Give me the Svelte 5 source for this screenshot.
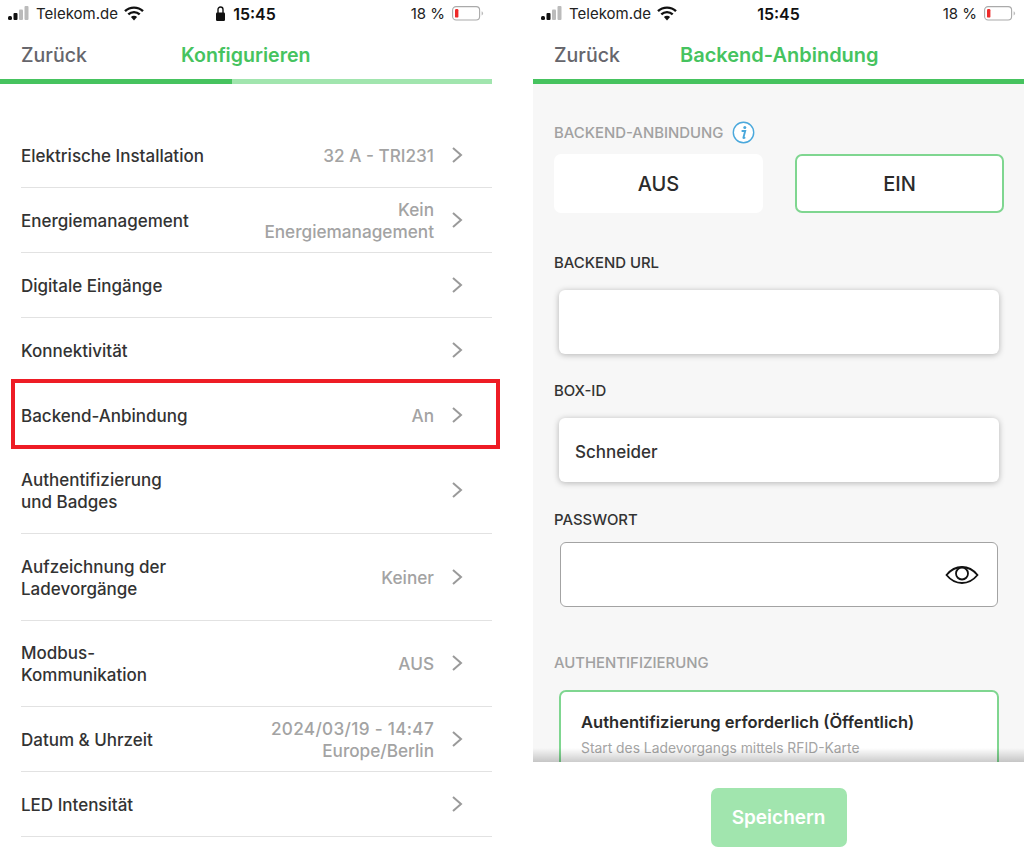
<script>
  const rows = [
    { label: ["Elektrische Installation"], value: ["32 A - TRI231"], tall: false },
    { label: ["Energiemanagement"], value: ["Kein", "Energiemanagement"], tall: false },
    { label: ["Digitale Eingänge"], value: [], tall: false },
    { label: ["Konnektivität"], value: [], tall: false },
    { label: ["Backend-Anbindung"], value: ["An"], tall: false, marked: true },
    { label: ["Authentifizierung", "und Badges"], value: [], tall: true },
    { label: ["Aufzeichnung der", "Ladevorgänge"], value: ["Keiner"], tall: true },
    { label: ["Modbus-", "Kommunikation"], value: ["AUS"], tall: true },
    { label: ["Datum & Uhrzeit"], value: ["2024/03/19 - 14:47", "Europe/Berlin"], tall: false, wide: true },
    { label: ["LED Intensität"], value: [], tall: false }
  ];
</script>

{#snippet statusBar(locked)}
  <div class="status">
    <div class="carrier">
      <svg width="22" height="15" viewBox="0 0 22 15">
        <rect x="0" y="10" width="4" height="4" rx="1.500" fill="#111" />
        <rect x="5.500" y="7" width="4" height="7" rx="1" fill="#111" />
        <rect x="11" y="3.500" width="4" height="10.500" rx="1" fill="#bbb" />
        <rect x="16.500" y="0" width="4" height="14" rx="1" fill="#bbb" />
      </svg>
      <span>Telekom.de</span>
      <svg class="wifi" width="20" height="15" viewBox="0 0 20 15">
        <path d="M1 5.200a13 13 0 0 1 18 0" fill="none" stroke="#111" stroke-width="2.400" />
        <path d="M4.300 8.400a8.400 8.400 0 0 1 11.400 0" fill="none" stroke="#111" stroke-width="2.400" />
        <path d="M6.900 11a4.400 4.400 0 0 1 6.200 0L10 14.400z" fill="#111" />
      </svg>
    </div>
    <div class="clock">
      {#if locked}
        <svg width="9" height="15" viewBox="0 0 9 15">
          <path d="M2 7V3.500a2.500 2.500 0 0 1 5 0V7" fill="none" stroke="#111" stroke-width="1.400" />
          <rect x="0" y="6.500" width="9" height="8.500" rx="1.200" fill="#111" />
        </svg>
      {/if}
      <span>15:45</span>
    </div>
    <div class="battery">
      <span>18 %</span>
      <svg width="32" height="15" viewBox="0 0 32 15">
        <rect x="0.600" y="0.600" width="27" height="13.400" rx="3.500" fill="#fff" stroke="#aaa" stroke-width="1.100" />
        <rect x="3" y="3" width="3.400" height="8.600" rx="1.200" fill="#ee2b2b" />
        <path d="M29.600 5.200a2.400 2.400 0 0 1 0 4.400z" fill="#bbb" />
      </svg>
    </div>
  </div>
{/snippet}

<div class="page">
  <section class="phone left">
    {@render statusBar(true)}
    <nav class="nav">
      <span class="back">Zurück</span>
      <span class="title title-left">Konfigurieren</span>
    </nav>
    <div class="progress"><div class="progress-done"></div></div>

    <ul class="list">
      {#each rows as row}
        <li class="row" class:tall={row.tall}>
          <div class="row-label">
            {#each row.label as line}<div>{line}</div>{/each}
          </div>
          <div class="row-value">
            {#each row.value as line, i}<div class:wide={row.wide && i === 0}>{line}</div>{/each}
          </div>
          <svg class="chevron" width="12" height="18" viewBox="0 0 12 18">
            <path d="M2 2l8 7-8 7" fill="none" stroke="#9a9a9a" stroke-width="2" />
          </svg>
          {#if row.marked}<div class="marker"></div>{/if}
        </li>
      {/each}
    </ul>
  </section>

  <section class="phone right">
    {@render statusBar(false)}
    <nav class="nav">
      <span class="back">Zurück</span>
      <span class="title title-right">Backend-Anbindung</span>
    </nav>
    <div class="progress full"></div>

    <main class="form">
      <div class="section-head">
        <span class="caption">BACKEND-ANBINDUNG</span>
        <svg width="23" height="23" viewBox="0 0 23 23">
          <circle cx="11.500" cy="11.500" r="10.200" fill="#fff" stroke="#4aa8dc" stroke-width="1.400" />
          <circle cx="12.800" cy="6.400" r="1.500" fill="#4aa8dc" />
          <path d="M9.600 10h3.600l-1.800 6.600c-.1.500.4.700 1.800-.3" fill="none" stroke="#4aa8dc" stroke-width="1.900" />
        </svg>
      </div>
      <div class="toggle">
        <button class="toggle-btn">AUS</button>
        <button class="toggle-btn active">EIN</button>
      </div>

      <div class="field-label url-label">BACKEND URL</div>
      <div class="input"></div>

      <div class="field-label">BOX-ID</div>
      <div class="input">Schneider</div>

      <div class="field-label password-label">PASSWORT</div>
      <div class="input outlined">
        <svg width="34" height="20" viewBox="0 0 34 20">
          <path d="M1.500 10C6 4.500 11 2 17 2s11 2.500 15.500 8C28 15.500 23 18 17 18S6 15.500 1.500 10z" fill="none" stroke="#111" stroke-width="1.800" />
          <circle cx="17" cy="8.500" r="6" fill="none" stroke="#111" stroke-width="1.800" />
        </svg>
      </div>

      <div class="caption auth-caption">AUTHENTIFIZIERUNG</div>
      <div class="auth-card">
        <div class="auth-title">Authentifizierung erforderlich (Öffentlich)</div>
        <div class="auth-sub">Start des Ladevorgangs mittels RFID-Karte</div>
      </div>
      <div class="fade"></div>
    </main>

    <footer class="footer">
      <button class="save">Speichern</button>
    </footer>
  </section>
</div>

<style>
  :global(body) {
    margin: 0;
    background: #fff;
  }

  .page {
    width: 1024px;
    height: 850px;
    display: flex;
    justify-content: space-between;
    overflow: hidden;
    font-family: Inter, "Liberation Sans", sans-serif;
    color: #333;
  }

  .phone {
    display: flex;
    flex-direction: column;
    height: 850px;
  }

  .left {
    width: 492px;
  }

  .right {
    width: 491px;
  }

  .status {
    height: 27px;
    padding: 0 8px;
    display: grid;
    grid-template-columns: 1fr auto 1fr;
    align-items: center;
    font-size: 15px;
    color: #222;
  }

  .carrier {
    display: flex;
    align-items: center;
    gap: 6px;
  }

  .clock {
    display: flex;
    align-items: center;
    gap: 8px;
    font-size: 16px;
    font-weight: 600;
    color: #111;
  }

  .battery {
    display: flex;
    align-items: center;
    justify-content: flex-end;
    gap: 7px;
  }

  .nav {
    height: 52px;
    box-sizing: border-box;
    padding: 4px 0 0 21px;
    display: flex;
    align-items: center;
    font-size: 19.600px;
    font-weight: 600;
  }

  .back {
    color: #66666c;
    font-weight: 500;
  }

  .title {
    color: #46c35f;
  }

  .title-left {
    margin-left: 94px;
  }

  .title-right {
    margin-left: 60px;
    font-size: 20px;
  }

  .progress {
    height: 5px;
    background: #a1e5ae;
    flex: none;
  }

  .progress-done {
    width: 232px;
    height: 100%;
    background: #46c35f;
  }

  .progress.full {
    background: #46c35f;
  }

  .list {
    list-style: none;
    margin: 39px 0 0 21px;
    padding: 0;
  }

  .row {
    position: relative;
    height: 63.900px;
    display: flex;
    align-items: center;
    border-bottom: 1px solid #e2e2e2;
    font-size: 17px;
    line-height: 22px;
  }

  .row.tall {
    height: 85.600px;
  }

  .row-label {
    flex: 1;
    padding-top: 2px;
    font-weight: 500;
    color: #333;
  }

  .row-value {
    padding-top: 2px;
    text-align: right;
    font-size: 17.200px;
    color: #a3a3a3;
    font-weight: 500;
  }

  .row-value .wide {
    letter-spacing: 0.300px;
  }

  .chevron {
    margin: 0 29px 0 17px;
  }

  .marker {
    position: absolute;
    left: -10px;
    right: -8px;
    top: -4px;
    height: 70px;
    border: 4px solid #ee1c25;
    box-sizing: border-box;
  }

  .form {
    position: relative;
    flex: 1;
    min-height: 0;
    overflow: hidden;
    background: #f7f7f7;
    padding: 37px 20px 0 21px;
  }

  .section-head {
    height: 23px;
    display: flex;
    align-items: center;
    gap: 9px;
  }

  .caption {
    font-size: 14.900px;
    color: #a1a1a1;
    font-weight: 500;
  }

  .toggle {
    margin-top: 10px;
    display: grid;
    grid-template-columns: 1fr 1fr;
    gap: 32px;
  }

  .toggle-btn {
    height: 59px;
    padding: 0;
    background: #fff;
    border: 0;
    border-radius: 7px;
    font: 500 20px Inter, "Liberation Sans", sans-serif;
    color: #2b2b2b;
  }

  .toggle-btn.active {
    border: 2px solid #7fd690;
  }

  .field-label {
    margin-top: 28px;
    margin-bottom: 18px;
    height: 18px;
    line-height: 18px;
    font-size: 14.900px;
    font-weight: 500;
    color: #333;
  }

  .url-label {
    margin-top: 41px;
  }

  .password-label {
    margin-top: 29px;
    margin-bottom: 13px;
  }

  .input {
    height: 64px;
    box-sizing: border-box;
    margin: 0 5px;
    padding: 3px 16px 0;
    display: flex;
    align-items: center;
    background: #fff;
    border-radius: 6px;
    box-shadow: 0 1px 6px rgba(0, 0, 0, 0.28);
    font-size: 17px;
    font-weight: 500;
    color: #333;
  }

  .input.outlined {
    height: 65px;
    margin: 0 6px;
    padding: 0 18px 0 0;
    justify-content: flex-end;
    border: 1px solid #a3a3a3;
    box-shadow: none;
  }

  .auth-caption {
    margin-top: 47px;
    height: 18px;
    line-height: 18px;
  }

  .auth-card {
    margin: 18px 5px 0;
    height: 120px;
    padding: 18px 20px 0;
    box-sizing: border-box;
    background: #fff;
    border: 2px solid #7fd690;
    border-radius: 7px;
  }

  .auth-title {
    font-size: 16.550px;
    line-height: 24px;
    font-weight: 600;
    color: #2b2b2b;
  }

  .auth-sub {
    margin-top: 5px;
    font-size: 13.850px;
    line-height: 18px;
    color: #a5a5a5;
  }

  .fade {
    position: absolute;
    left: 0;
    right: 0;
    bottom: 0;
    height: 14px;
    background: linear-gradient(rgba(0, 0, 0, 0), rgba(0, 0, 0, 0.2));
  }

  .footer {
    height: 88px;
    flex: none;
    display: flex;
    justify-content: center;
    align-items: flex-start;
    background: #fff;
  }

  .save {
    width: 136px;
    height: 59px;
    margin-top: 26px;
    border: 0;
    border-radius: 7px;
    background: #a1e5ae;
    color: #fff;
    font: 600 19px Inter, "Liberation Sans", sans-serif;
  }
</style>
